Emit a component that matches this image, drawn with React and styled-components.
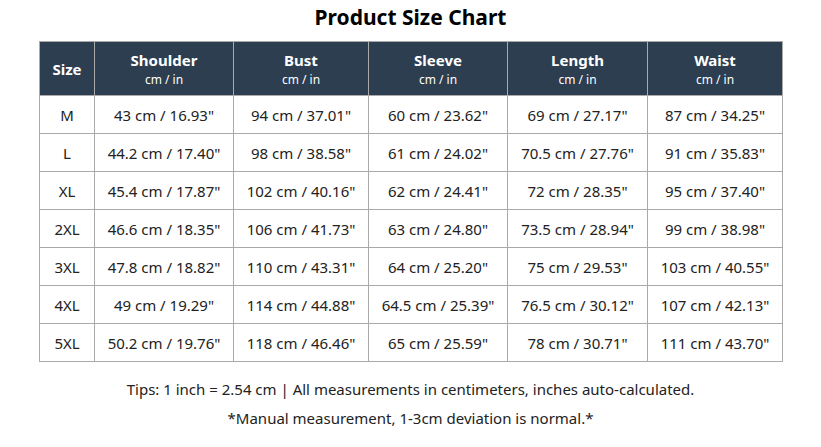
import React from 'react'
import styled, { createGlobalStyle } from 'styled-components'

const GlobalStyle = createGlobalStyle`
  body {
    margin: 0;
    background: #fff;
    font-family: 'Noto Sans', 'Open Sans', sans-serif;
    color: #222;
  }
`

const Page = styled.div`
  width: 743px;
  margin: 0 auto;
  padding-top: 4px;
`

const Title = styled.h2`
  margin: 0 0 11px;
  text-align: center;
  font-size: 21px;
  line-height: 26px;
  font-weight: 700;
  color: #000;
`

const Table = styled.table`
  width: 743px;
  border-collapse: collapse;
  table-layout: fixed;
`

const HeadCell = styled.th`
  height: 51px;
  padding: 2px 0 0;
  background: #2c3e50;
  color: #fff;
  border: 1px solid #aaa;
  text-align: center;
  vertical-align: middle;
  font-size: 15px;
  line-height: 19px;
  font-weight: 700;
`

const Unit = styled.div`
  margin-top: 1px;
  font-size: 12px;
  line-height: 17px;
  font-weight: 400;
`

const Cell = styled.td`
  height: 37px;
  padding: 0;
  border: 1px solid #aaa;
  text-align: center;
  vertical-align: middle;
  font-size: 15px;
  color: #222;
  white-space: nowrap;
`

const Note = styled.p`
  margin: 0;
  text-align: center;
  font-size: 15px;
  line-height: 29px;
  color: #222;
  &:first-of-type {
    margin-top: 13px;
  }
`

const columns = [
  { label: 'Size', width: 55 },
  { label: 'Shoulder', width: 139, unit: true },
  { label: 'Bust', width: 135, unit: true },
  { label: 'Sleeve', width: 139, unit: true },
  { label: 'Length', width: 140, unit: true },
  { label: 'Waist', width: 135, unit: true },
]

const rows = [
  ['M', '43 cm / 16.93"', '94 cm / 37.01"', '60 cm / 23.62"', '69 cm / 27.17"', '87 cm / 34.25"'],
  ['L', '44.2 cm / 17.40"', '98 cm / 38.58"', '61 cm / 24.02"', '70.5 cm / 27.76"', '91 cm / 35.83"'],
  ['XL', '45.4 cm / 17.87"', '102 cm / 40.16"', '62 cm / 24.41"', '72 cm / 28.35"', '95 cm / 37.40"'],
  ['2XL', '46.6 cm / 18.35"', '106 cm / 41.73"', '63 cm / 24.80"', '73.5 cm / 28.94"', '99 cm / 38.98"'],
  ['3XL', '47.8 cm / 18.82"', '110 cm / 43.31"', '64 cm / 25.20"', '75 cm / 29.53"', '103 cm / 40.55"'],
  ['4XL', '49 cm / 19.29"', '114 cm / 44.88"', '64.5 cm / 25.39"', '76.5 cm / 30.12"', '107 cm / 42.13"'],
  ['5XL', '50.2 cm / 19.76"', '118 cm / 46.46"', '65 cm / 25.59"', '78 cm / 30.71"', '111 cm / 43.70"'],
]

export default function App() {
  return (
    <>
      <GlobalStyle />
      <Page>
        <Title>Product Size Chart</Title>
        <Table>
          <colgroup>
            {columns.map((c) => (
              <col key={c.label} style={{ width: c.width }} />
            ))}
          </colgroup>
          <thead>
            <tr>
              {columns.map((c) => (
                <HeadCell key={c.label}>
                  {c.label}
                  {c.unit && <Unit>cm / in</Unit>}
                </HeadCell>
              ))}
            </tr>
          </thead>
          <tbody>
            {rows.map((r) => (
              <tr key={r[0]}>
                {r.map((v, i) => (
                  <Cell key={i}>{v}</Cell>
                ))}
              </tr>
            ))}
          </tbody>
        </Table>
        <Note>Tips: 1 inch = 2.54 cm | All measurements in centimeters, inches auto-calculated.</Note>
        <Note>*Manual measurement, 1-3cm deviation is normal.*</Note>
      </Page>
    </>
  )
}
